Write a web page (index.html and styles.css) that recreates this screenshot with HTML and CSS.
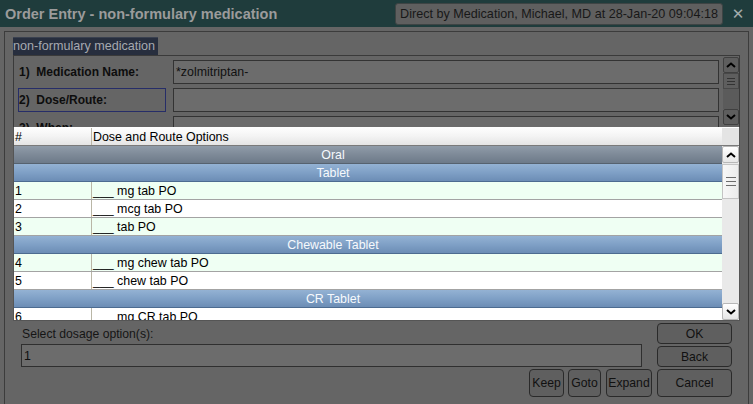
FILE: index.html
```html
<!DOCTYPE html>
<html>
<head>
<meta charset="utf-8">
<link rel="stylesheet" href="styles.css">
</head>
<body>
<div class="window">
  <div class="titlebar">
    <div class="title">Order Entry - non-formulary medication</div>
    <div class="stamp">Direct by Medication, Michael, MD at 28-Jan-20 09:04:18</div>
    <div class="close">&#x2715;</div>
  </div>
  <div class="frame">
    <div class="tab">non-formulary medication</div>
    <div class="panel">
      <div class="rows">
        <div class="row">
          <div class="label">1)  Medication Name:</div>
          <div class="field">*zolmitriptan-</div>
        </div>
        <div class="row">
          <div class="label focused">2)  Dose/Route:</div>
          <div class="field"></div>
        </div>
        <div class="row">
          <div class="label">3)  When:</div>
          <div class="field"></div>
        </div>
      </div>
      <div class="mscroll">
        <div class="mbtn"><svg width="10" height="6" viewBox="0 0 10 6"><polyline points="1,5 5,1.5 9,5" fill="none" stroke="#000" stroke-width="2"/></svg></div>
        <div class="mthumb"><span></span><span></span><span></span></div>
        <div class="mtrack"></div>
        <div class="mbtn"><svg width="10" height="6" viewBox="0 0 10 6"><polyline points="1,1 5,4.5 9,1" fill="none" stroke="#000" stroke-width="2"/></svg></div>
      </div>
    </div>
    <div class="bottom">
      <div class="prompt">Select dosage option(s):</div>
      <button class="btn">OK</button>
      <div class="entry">1</div>
      <button class="btn">Back</button>
      <div class="minor">
        <button class="btn keep">Keep</button>
        <button class="btn goto">Goto</button>
        <button class="btn expand">Expand</button>
      </div>
      <button class="btn cancel">Cancel</button>
    </div>
  </div>

  <div class="popup">
    <div class="phead">
      <div class="c1">#</div>
      <div class="c2">Dose and Route Options</div>
      <div class="corner"></div>
    </div>
    <div class="pbody">
      <div class="list">
        <div class="group route">Oral</div>
        <div class="group">Tablet</div>
        <div class="item mint"><div class="c1">1</div><div class="c2">___ mg tab PO</div></div>
        <div class="item"><div class="c1">2</div><div class="c2">___ mcg tab PO</div></div>
        <div class="item mint"><div class="c1">3</div><div class="c2">___ tab PO</div></div>
        <div class="group">Chewable Tablet</div>
        <div class="item mint"><div class="c1">4</div><div class="c2">___ mg chew tab PO</div></div>
        <div class="item"><div class="c1">5</div><div class="c2">___ chew tab PO</div></div>
        <div class="group">CR Tablet</div>
        <div class="item"><div class="c1">6</div><div class="c2">___ mg CR tab PO</div></div>
      </div>
      <div class="pscroll">
        <div class="pbtn"><svg width="10" height="6" viewBox="0 0 10 6"><polyline points="1,5 5,1.5 9,5" fill="none" stroke="#000" stroke-width="2"/></svg></div>
        <div class="pthumb"><span></span><span></span><span></span></div>
        <div class="ptrack"></div>
        <div class="pbtn"><svg width="10" height="6" viewBox="0 0 10 6"><polyline points="1,1 5,4.5 9,1" fill="none" stroke="#000" stroke-width="2"/></svg></div>
      </div>
    </div>
  </div>
</div>
</body>
</html>
```
FILE: styles.css
```css
* { box-sizing: border-box; }
html, body { margin: 0; padding: 0; background: #656565; }
body { font-family: "Liberation Sans", Arial, sans-serif; font-size: 12px; color: #111; }

.window {
  position: relative;
  width: 753px;
  height: 404px;
  overflow: hidden;
  background: #656565;
}

.titlebar {
  height: 27px;
  background: #1f3c3c;
  display: flex;
  align-items: center;
}
.title {
  padding-left: 5px;
  font-weight: bold;
  font-size: 14.5px;
  color: #9b9b9b;
  white-space: nowrap;
}
.stamp {
  margin-left: auto;
  width: 328px;
  height: 22px;
  margin-top: 1px;
  background: #5f5f5f;
  border: 1px solid #3e4444;
  border-radius: 3px;
  color: #181818;
  font-size: 12.6px;
  white-space: nowrap;
  display: flex;
  align-items: center;
  justify-content: center;
}
.close {
  width: 30px;
  text-align: center;
  color: #a3abab;
  font-size: 15px;
  font-family: "DejaVu Sans", sans-serif;
}

.frame {
  margin: 4px 0 0 4px;
  width: 745px;
  height: 380px;
  border: 1px solid #3c3c3c;
  border-bottom: none;
  padding: 5px 0 0 8px;
}
.tab {
  width: 145px;
  height: 18px;
  background: #272e3e;
  border-top: 1px solid #3a4150;
  color: #a6a9b0;
  font-size: 12.6px;
  line-height: 17px;
  white-space: nowrap;
}
.panel {
  width: 727px;
  height: 265px;
  border: 1px solid #3a3a3a;
  display: flex;
  align-items: flex-start;
}
.rows {
  padding-top: 4px;
  display: flex;
  flex-direction: column;
  gap: 4px;
}
.row {
  display: flex;
  align-items: stretch;
  height: 24px;
}
.label {
  margin-left: 4px;
  width: 148px;
  border: 1px solid transparent;
  font-weight: bold;
  font-size: 12px;
  white-space: pre;
  display: flex;
  align-items: center;
  color: #0d0d0d;
}
.label.focused { border-color: #262d68; }
.field {
  margin-left: 7px;
  width: 546px;
  background: #6c6c6c;
  border: 1px solid #333;
  font-size: 12.4px;
  padding-left: 2px;
  display: flex;
  align-items: center;
  color: #111;
}
.mscroll {
  margin-left: 4px;
  margin-top: 1px;
  width: 16px;
  display: flex;
  flex-direction: column;
}
.mbtn {
  height: 16px;
  background: #5e5e5e;
  border: 1px solid #404040;
  border-radius: 2px;
  display: flex;
  align-items: center;
  justify-content: center;
}
.mthumb {
  height: 16px;
  background: #5e5e5e;
  border: 1px solid #484848;
  display: flex;
  flex-direction: column;
  align-items: center;
  justify-content: center;
  gap: 2px;
}
.mthumb span { width: 8px; height: 1px; background: #333; }
.mtrack { height: 20px; background: #5b5b5b; }

.bottom {
  display: grid;
  grid-template-columns: 631px 75px;
  grid-template-rows: 21px 21px 28px;
  column-gap: 5px;
  row-gap: 2px;
  padding: 3px 0 0 8px;
}
.prompt {
  align-self: center;
  padding-left: 1px;
  font-size: 12.2px;
  color: #151515;
}
.entry {
  width: 621px;
  height: 23px;
  margin-top: -2px;
  background: #6c6c6c;
  border: 1px solid #2f2f2f;
  padding-left: 2px;
  font-size: 12.4px;
  display: flex;
  align-items: center;
  color: #111;
}
.minor {
  display: flex;
  justify-content: flex-end;
  gap: 4px;
}
.btn {
  margin: 0;
  padding: 0;
  background: #5f5f5f;
  border: 1px solid #2a2a2a;
  border-radius: 4px;
  font-family: "Liberation Sans", Arial, sans-serif;
  font-size: 12.2px;
  color: #111;
}
.keep { width: 35px; }
.goto { width: 33px; }
.expand { width: 46px; margin-left: 1px; }

.popup {
  position: absolute;
  left: 13px;
  top: 127px;
  width: 727px;
  height: 194px;
  border: 1px solid #555;
  border-top: none;
  background: #fff;
  color: #000;
  font-size: 12.4px;
  display: flex;
  flex-direction: column;
}
.phead {
  height: 19px;
  padding-top: 1px;
  display: flex;
  background: linear-gradient(#ffffff, #f4f4f4 50%, #e4e4e4);
  border-bottom: 1px solid #7a7a7a;
}
.phead .c1, .item .c1 {
  width: 78px;
  border-right: 1px solid #b9b6a6;
  padding-left: 1px;
  display: flex;
  align-items: center;
}
.phead .c2, .item .c2 {
  flex: 1;
  padding-left: 1px;
  display: flex;
  align-items: center;
}
.phead .corner {
  width: 17px;
  background: #e4e4e4;
}
.pbody {
  flex: 1;
  display: flex;
  overflow: hidden;
}
.list {
  width: 708px;
  display: flex;
  flex-direction: column;
}
.group {
  flex: none;
  height: 18px;
  background: linear-gradient(#94b2d3, #7fa0c6 50%, #6c8db5);
  border-bottom: 1px solid #4c6b90;
  color: #f6f9fc;
  text-align: center;
  padding-right: 70px;
  line-height: 18px;
}
.group.route {
  background: linear-gradient(#909ca9, #7e8a98 50%, #6d7a89);
  border-bottom-color: #56626f;
}
.item {
  flex: none;
  height: 18px;
  display: flex;
  background: #fff;
  border-bottom: 1px solid #a3a3a3;
}
.item.mint { background: #effff3; }
.pscroll {
  width: 17px;
  background: #e9e9e9;
  display: flex;
  flex-direction: column;
}
.pbtn {
  height: 17px;
  background: linear-gradient(#ffffff, #e6e6e6);
  border: 1px solid #b7b7b7;
  border-radius: 2px;
  display: flex;
  align-items: center;
  justify-content: center;
}
.pthumb {
  height: 35px;
  margin-top: 1px;
  background: linear-gradient(90deg, #f7f7f7, #ececec);
  border: 1px solid #c4c4c4;
  display: flex;
  flex-direction: column;
  align-items: center;
  justify-content: center;
  gap: 3px;
}
.pthumb span { width: 10px; height: 1px; background: #6c6c6c; }
.ptrack { flex: 1; }
```
